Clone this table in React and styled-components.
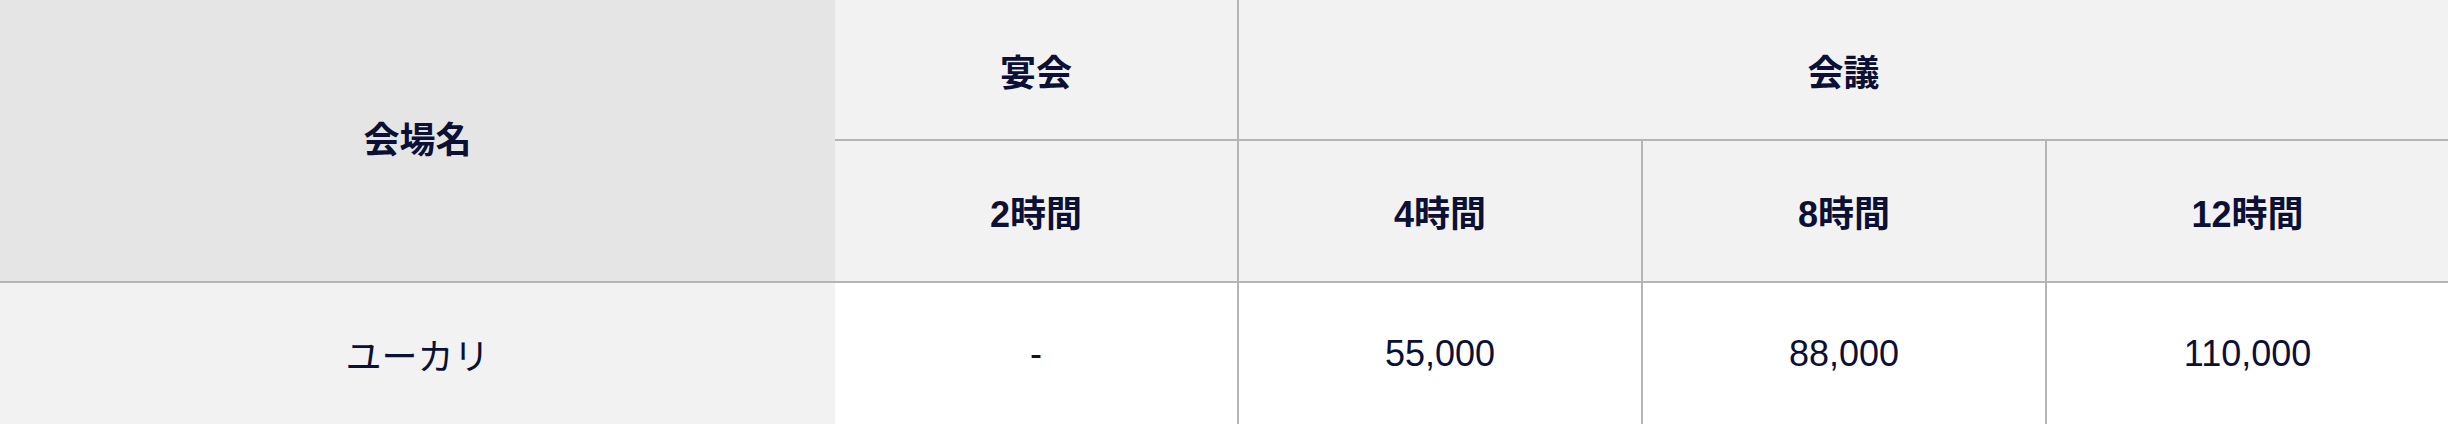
import React from 'react'
import styled, { createGlobalStyle } from 'styled-components'

const ink = '#0b1034'
const line = '#b5b5b5'

const GlobalStyle = createGlobalStyle`
    html, body {
        margin : 0;
        padding : 0;
        background : #ffffff;
    }
`

const PriceTable = styled.table`
    width : 2448px;
    height : 424px;
    border-collapse : collapse;
    table-layout : fixed;
    font-family : "Liberation Sans", "Noto Sans CJK JP", sans-serif;
    color : ${ink};
`

const Column = styled.col`
    width : ${props => props.$w}px;
`

const HeadCell = styled.th`
    height : ${props => props.$h || 139}px;
    padding : 0 0 ${props => props.$lift || 0}px;
    font-size : 36px;
    font-weight : 700;
    text-align : center;
    vertical-align : middle;
    background : ${props => props.$dark ? '#e5e5e5' : '#f2f2f2'};
    border-bottom : 2px solid ${line};
    border-left : ${props => props.$first ? 'none' : `2px solid ${line}`};
`

const BodyCell = styled.td`
    height : 141px;
    padding : 0;
    font-size : 36px;
    font-weight : 400;
    text-align : center;
    vertical-align : middle;
    background : ${props => props.$name ? '#f2f2f2' : '#ffffff'};
    border-left : ${props => props.$first ? 'none' : `2px solid ${line}`};
`

const widths = [835, 403, 404, 404, 402]

const rows = [
    { name : 'ユーカリ', prices : ['-', '55,000', '88,000', '110,000'] },
]

const hours = ['2時間', '4時間', '8時間', '12時間']

const App = () => {
    return (
        <>
            <GlobalStyle />
            <PriceTable>
                <colgroup>
                    {widths.map((w, i) => <Column key={i} $w={w} />)}
                </colgroup>
                <thead>
                    <tr>
                        <HeadCell rowSpan={2} $dark $first $lift={8}>会場名</HeadCell>
                        <HeadCell $first>宴会</HeadCell>
                        <HeadCell colSpan={3}>会議</HeadCell>
                    </tr>
                    <tr>
                        {hours.map((h, i) => (
                            <HeadCell key={h} $h={140} $first={i === 0}>{h}</HeadCell>
                        ))}
                    </tr>
                </thead>
                <tbody>
                    {rows.map(r => (
                        <tr key={r.name}>
                            <BodyCell $name $first>{r.name}</BodyCell>
                            {r.prices.map((p, i) => (
                                <BodyCell key={i} $first={i === 0}>{p}</BodyCell>
                            ))}
                        </tr>
                    ))}
                </tbody>
            </PriceTable>
        </>
    )
}

export default App
